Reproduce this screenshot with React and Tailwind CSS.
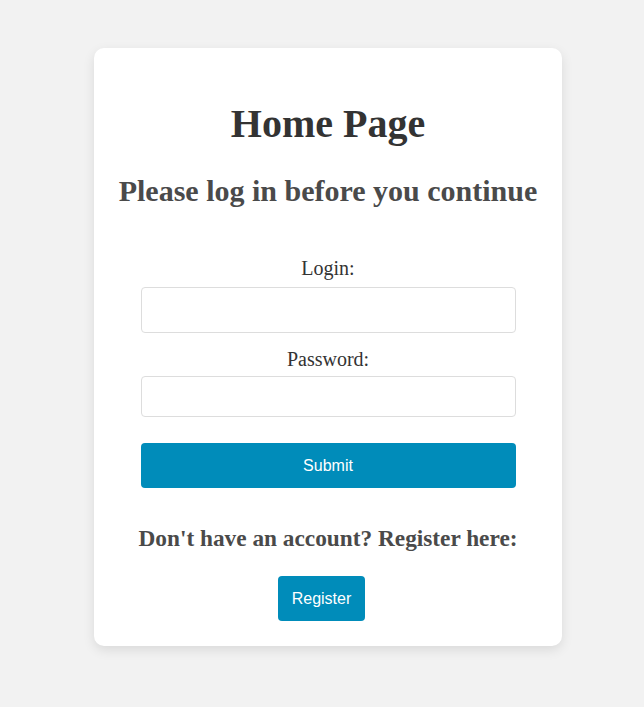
import React from 'react';

const serif = "font-['Liberation_Serif','Times_New_Roman',serif]";
const sans = "font-['Liberation_Sans',Arial,sans-serif]";

const App = () => {
  return (
    <div className="min-h-screen bg-[#f2f2f2] pt-[48px] pb-[61px]">
      <div className={`ml-[94px] w-[468px] bg-white rounded-[10px] shadow-[0_4px_12px_rgba(0,0,0,0.1)] pt-[52px] pb-[25px] flex flex-col items-center ${serif}`}>
        <h1 className="text-[40px] leading-[48px] font-bold text-[#333]">Home Page</h1>
        <h2 className="mt-[25px] text-[30px] leading-[36px] font-bold text-[#4a4a4a]">
          Please log in before you continue
        </h2>

        <form className="mt-[47px] w-[375px] flex flex-col items-center" onSubmit={(e) => e.preventDefault()}>
          <label htmlFor="login" className="text-[20px] leading-[24px] text-[#333]">Login:</label>
          <input
            id="login"
            type="text"
            className="mt-[7px] w-full h-[46px] border border-[#ddd] rounded-[4px] bg-white outline-none"
          />
          <label htmlFor="password" className="mt-[14px] text-[20px] leading-[24px] text-[#333]">Password:</label>
          <input
            id="password"
            type="password"
            className="mt-[5px] w-full h-[41px] border border-[#ddd] rounded-[4px] bg-white outline-none"
          />
          <button
            type="submit"
            className={`mt-[26px] w-full h-[45px] bg-[#008cba] text-white text-[16px] rounded-[4px] ${sans}`}
          >
            Submit
          </button>
        </form>

        <h3 className="mt-[36px] text-[23.3px] leading-[28px] font-bold text-[#4a4a4a]">
          Don&apos;t have an account? Register here:
        </h3>
        <button
          className={`mt-[24px] mr-[13px] w-[87px] h-[45px] bg-[#008cba] text-white text-[16px] rounded-[4px] ${sans}`}
        >
          Register
        </button>
      </div>
    </div>
  );
};

export default App;
